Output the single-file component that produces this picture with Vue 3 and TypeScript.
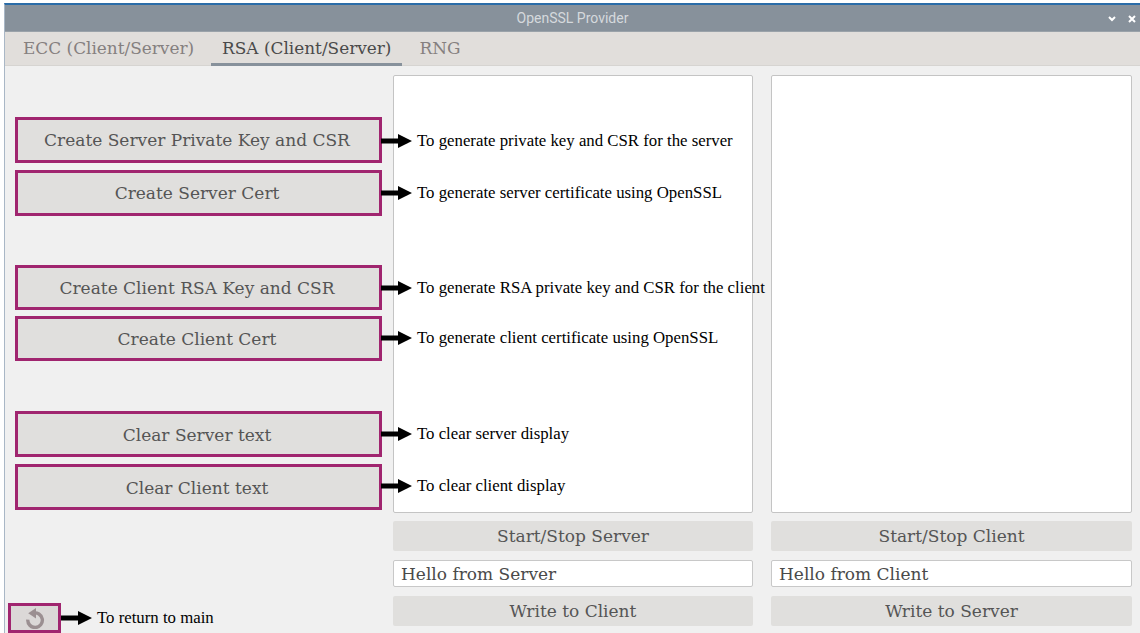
<script setup lang="ts">
interface Action {
  label: string;
  note: string;
}

const groups: Action[][] = [
  [
    { label: "Create Server Private Key and CSR", note: "To generate private key and CSR for the server" },
    { label: "Create Server Cert", note: "To generate server certificate using OpenSSL" },
  ],
  [
    { label: "Create Client RSA Key and CSR", note: "To generate RSA private key and CSR for the client" },
    { label: "Create Client Cert", note: "To generate client certificate using OpenSSL" },
  ],
  [
    { label: "Clear Server text", note: "To clear server display" },
    { label: "Clear Client text", note: "To clear client display" },
  ],
];

const panes = [
  { start: "Start/Stop Server", message: "Hello from Server", write: "Write to Client" },
  { start: "Start/Stop Client", message: "Hello from Client", write: "Write to Server" },
];

const tabs = ["ECC (Client/Server)", "RSA (Client/Server)", "RNG"];
</script>

<template>
  <div class="desktop">
    <div class="window">
      <header class="titlebar">
        <span class="title">OpenSSL Provider</span>
        <div class="win-controls">
          <svg width="8" height="6" viewBox="0 0 8 6"><path d="M1 1l3 3 3-3" fill="none" stroke="#fff" stroke-width="2" /></svg>
          <svg width="8" height="8" viewBox="0 0 8 8"><path d="M1 1l6 6M7 1l-6 6" fill="none" stroke="#fff" stroke-width="2" /></svg>
        </div>
      </header>

      <nav class="tabs">
        <span v-for="(tab, i) in tabs" :key="tab" class="tab" :class="{ active: i === 1 }">{{ tab }}</span>
      </nav>

      <main class="content">
        <section class="actions">
          <div class="groups">
            <div v-for="(group, g) in groups" :key="g" class="group">
              <div v-for="action in group" :key="action.label" class="action">
                <button class="btn marked">{{ action.label }}</button>
                <div class="callout">
                  <svg class="arrow" width="31" height="14" viewBox="0 0 31 14"><path d="M0 4.5h17V0l14 7-14 7V9.5H0z" fill="#000" /></svg>
                  <span>{{ action.note }}</span>
                </div>
              </div>
            </div>
          </div>
          <div class="back-row">
            <button class="back" aria-label="Back">
              <svg width="22" height="22" viewBox="0 0 22 22">
                <path d="M9 6.2A7.3 7.3 0 1 1 3.8 12.6" fill="none" stroke="#9b8f91" stroke-width="3.4" />
                <path d="M12 1v10.5L4.2 6.2z" fill="#9b8f91" />
              </svg>
            </button>
            <svg class="arrow" width="31" height="14" viewBox="0 0 31 14"><path d="M0 4.5h17V0l14 7-14 7V9.5H0z" fill="#000" /></svg>
            <span class="note">To return to main</span>
          </div>
        </section>

        <section v-for="pane in panes" :key="pane.start" class="pane">
          <div class="display"></div>
          <button class="btn flat">{{ pane.start }}</button>
          <div class="entry">{{ pane.message }}</div>
          <button class="btn flat">{{ pane.write }}</button>
        </section>
      </main>
    </div>
  </div>
</template>

<style scoped>
.desktop {
  width: 1140px;
  height: 633px;
  overflow: hidden;
  padding-top: 3px;
  box-sizing: border-box;
  background: #fff;
}

.window {
  height: 630px;
  margin-left: 4px;
  border-left: 1px solid #a9b7c6;
  border-top: 2px solid #2a6ca8;
  box-sizing: border-box;
  display: flex;
  flex-direction: column;
  background: #f0f0f0;
}

.titlebar {
  height: 27px;
  flex: none;
  background: #87919b;
  display: flex;
  align-items: center;
  justify-content: center;
  position: relative;
  font-family: Roboto, "Liberation Sans", sans-serif;
  font-size: 14px;
  color: #d5d9dd;
  border-bottom: 1px solid #9aa2a9;
  box-sizing: border-box;
}

.win-controls {
  position: absolute;
  right: 4px;
  top: 10px;
  display: flex;
  align-items: center;
  gap: 12px;
}

.tabs {
  height: 34px;
  flex: none;
  box-sizing: border-box;
  background: #e1dedb;
  border-bottom: 1px solid #d6d4d1;
  padding-left: 7px;
  display: flex;
  font-family: "DejaVu Serif", serif;
  font-size: 16.9px;
  color: #85807f;
}

.tab {
  padding: 6px 11px 0;
  margin-right: 6px;
  margin-bottom: -1px;
  white-space: nowrap;
}

.tab.active {
  color: #4a4a4a;
  border-bottom: 3px solid #87919b;
}

.content {
  flex: 1;
  min-height: 0;
  display: flex;
  padding: 9px 8px 0 3px;
}

.actions {
  width: 385px;
  flex: none;
  display: flex;
  flex-direction: column;
  position: relative;
  z-index: 1;
}

.groups {
  padding: 42px 0 0 7px;
  display: flex;
  flex-direction: column;
  gap: 49px;
}

.group {
  display: flex;
  flex-direction: column;
  gap: 7px;
}

.group:nth-child(2) {
  gap: 6px;
  margin-bottom: 1px;
}

.group:nth-child(2) .marked {
  height: 45px;
}

.group:nth-child(3) .marked {
  padding-top: 2px;
}

.action {
  position: relative;
  width: 367px;
}

.btn {
  display: block;
  width: 100%;
  box-sizing: border-box;
  padding: 0 3px 0 0;
  background: #e0dfdd;
  font-family: "DejaVu Serif", serif;
  font-size: 17px;
  color: #555;
  text-align: center;
}

.marked {
  height: 46px;
  border: 3px solid #a0256f;
}

.callout {
  position: absolute;
  left: 366px;
  top: 50%;
  transform: translateY(-50%);
  display: flex;
  align-items: center;
  gap: 5px;
  font-family: "Liberation Serif", serif;
  font-size: 16.8px;
  color: #000;
  white-space: nowrap;
}

.group:first-child .action:first-child .callout {
  top: calc(50% + 1px);
}

.group:last-child .action:last-child .callout,
.group:nth-child(2) .action:last-child .callout {
  top: calc(50% - 1px);
}

.arrow {
  flex: none;
}

.back-row {
  margin-top: auto;
  display: flex;
  align-items: center;
}

.back {
  width: 53px;
  height: 30px;
  padding: 0;
  box-sizing: border-box;
  border: 3px solid #a0256f;
  background: #dbd8d7;
  display: flex;
  align-items: center;
  justify-content: center;
}

.note {
  margin-left: 5px;
  font-family: "Liberation Serif", serif;
  font-size: 16.8px;
  color: #000;
}

.pane {
  width: 360px;
  flex: none;
  margin-right: 18px;
  display: flex;
  flex-direction: column;
}

.pane:last-child {
  width: 361px;
  margin-right: 0;
}

.display {
  height: 438px;
  box-sizing: border-box;
  background: #fff;
  border: 1px solid #c4c4c4;
  border-radius: 2px;
}

.flat {
  height: 30px;
  margin-top: 8px;
  padding: 0;
  border: none;
  border-radius: 2px;
}

.entry {
  height: 27px;
  margin-top: 9px;
  margin-bottom: 1px;
  box-sizing: border-box;
  padding-left: 7px;
  display: flex;
  align-items: center;
  background: #fff;
  border: 1px solid #c8c8c8;
  border-radius: 2px;
  font-family: "DejaVu Serif", serif;
  font-size: 17px;
  color: #4a4a4a;
}
</style>
